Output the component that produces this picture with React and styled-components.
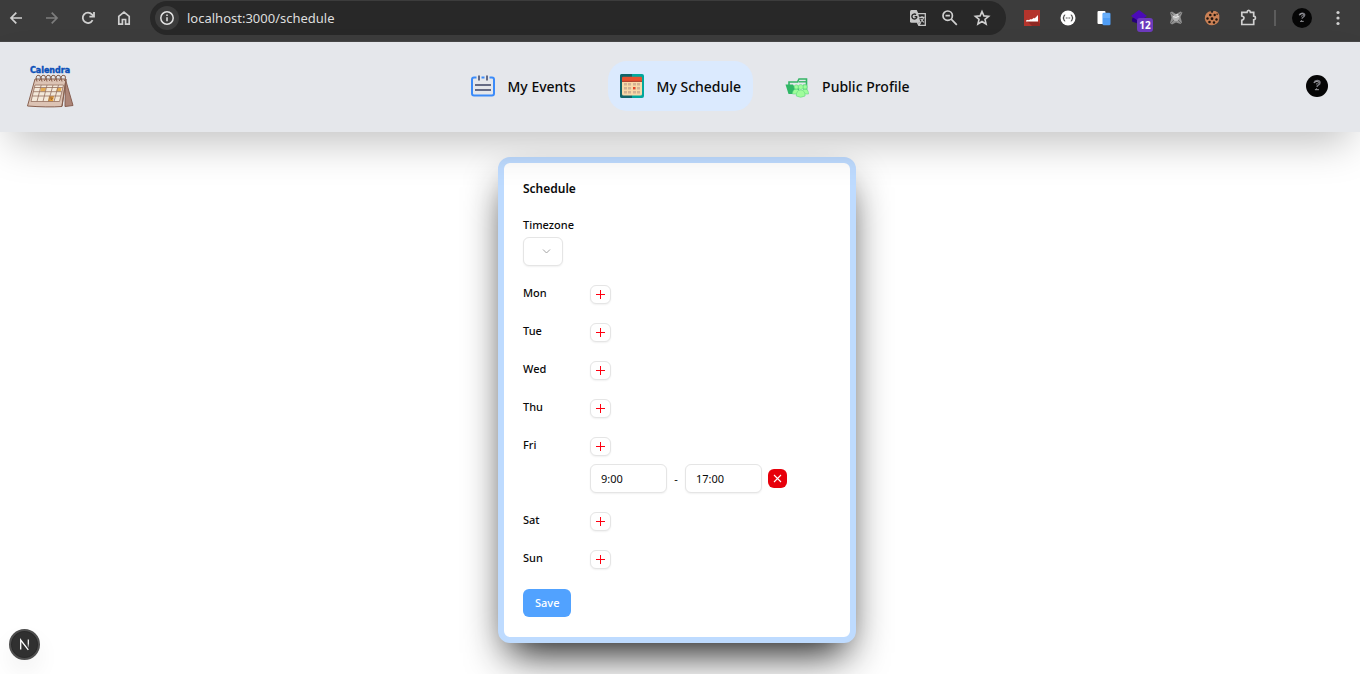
import React from "react";
import styled, { createGlobalStyle, css } from "styled-components";

const GlobalStyle = createGlobalStyle`
  *, *::before, *::after { box-sizing: border-box; }
  body {
    margin: 0;
    background: #fff;
    color: #0a0a0a;
    font-family: "Noto Sans", "Open Sans", sans-serif;
    font-size: 11px;
    line-height: 16px;
  }
  button, input, select { font: inherit; color: inherit; margin: 0; }
  svg { display: block; flex: none; }
`;

/* ---------- browser bar ---------- */

const Toolbar = styled.div`
  display: flex;
  align-items: center;
  gap: 16px;
  height: 42px;
  padding: 1px 12px 6px 6px;
  background: #3c3c3c;
  border-bottom: 1px solid #484848;
`;

const ToolButton = styled.button`
  position: relative;
  display: grid;
  place-items: center;
  flex: none;
  width: 20px;
  height: 20px;
  padding: 0;
  border: 0;
  border-radius: 50%;
  background: none;
  color: ${(p) => (p.$dim ? "#7d7d7d" : "#d0d0d0")};
`;

const AddressBar = styled.div`
  display: flex;
  align-items: center;
  gap: 12px;
  flex: 1;
  min-width: 0;
  height: 34px;
  padding: 0 14px 0 5px;
  border-radius: 17px;
  background: #282828;
`;

const Site = styled.label`
  display: flex;
  align-items: center;
  gap: 8px;
  flex: 1;
  min-width: 0;
`;

const SiteInfo = styled.span`
  display: grid;
  place-items: center;
  flex: none;
  width: 24px;
  height: 24px;
  border-radius: 50%;
  background: #3c3c3c;
  color: #e3e3e3;
`;

const Address = styled.input`
  flex: 1;
  min-width: 0;
  padding: 0;
  border: 0;
  outline: 0;
  background: none;
  color: #dedede;
  font-family: "Noto Sans", sans-serif;
  font-size: 13px;
  line-height: 20px;
`;

const Separator = styled.span`
  flex: none;
  width: 2px;
  height: 16px;
  background: #5c5c5c;
`;

const Badge = styled.span`
  position: absolute;
  left: 7px;
  top: 10px;
  width: 16px;
  height: 14px;
  border-radius: 3px;
  background: #6d3bbd;
  color: #fff;
  font-size: 10px;
  font-weight: 700;
  line-height: 14px;
  text-align: center;
`;

/* ---------- site header ---------- */

const Header = styled.header`
  position: relative;
  z-index: 1;
  display: flex;
  align-items: center;
  justify-content: space-between;
  height: 90px;
  padding: 0 32px 2px 26px;
  background: #e5e7eb;
  box-shadow: 0 20px 40px -10px rgba(0, 0, 0, 0.25);
`;

const Nav = styled.nav`
  display: flex;
  gap: 20px;
`;

const NavLink = styled.a`
  display: flex;
  align-items: center;
  gap: 13px;
  height: 50px;
  padding: 0 12px;
  border-radius: 19px;
  color: #0a0a0a;
  font-size: 14px;
  font-weight: 500;
  line-height: 20px;
  text-decoration: none;
  ${(p) => p.$active && css`background: #dbeafe;`}

  > span { padding-top: 2px; }
`;

const UserButton = styled.button`
  display: block;
  padding: 0;
  border: 0;
  border-radius: 50%;
  background: none;
`;

/* ---------- schedule card ---------- */

const Main = styled.main`
  display: flex;
  justify-content: center;
  padding: 25px 6px 31px 0;
  overflow: hidden;
`;

const Card = styled.form`
  width: 358px;
  padding: 16px 19px 20px;
  border: 6px solid #bedbff;
  border-radius: 12px;
  background: #fff;
  box-shadow: 0 20px 40px -10px #171717;
`;

const Title = styled.h1`
  margin: 0 0 18px;
  font-size: 12px;
  font-weight: 600;
  line-height: 20px;
`;

const Field = styled.div`
  display: flex;
  flex-direction: column;
  align-items: flex-start;
  gap: 4px;
  margin-bottom: 19px;
`;

const Label = styled.label`
  font-weight: 500;
`;

const box = css`
  border: 1px solid #e5e5e5;
  border-radius: 6px;
  background: #fff;
  box-shadow: 0 1px 2px rgba(0, 0, 0, 0.06);
`;

const SelectWrap = styled.span`
  display: grid;
  align-items: center;
  color: #a3a3a3;

  > * { grid-area: 1 / 1; }
  > svg { justify-self: end; margin-right: 11px; pointer-events: none; }
`;

const Select = styled.select`
  ${box}
  appearance: none;
  width: 40px;
  height: 29px;
`;

const Days = styled.div`
  display: grid;
  gap: 19px;
  margin-bottom: 20px;
`;

const Day = styled.div`
  display: grid;
  grid-template-columns: 48px 1fr;
  column-gap: 19px;
`;

const DayName = styled.span`
  height: 16px;
  font-weight: 500;
`;

const Slots = styled.div`
  display: flex;
  flex-direction: column;
  align-items: flex-start;
  gap: 8px;
`;

const AddButton = styled.button`
  ${box}
  display: grid;
  place-items: center;
  width: 21px;
  height: 19px;
  padding: 0;
  color: #ff0010;
`;

const Slot = styled.div`
  display: flex;
  align-items: center;
  gap: 6px;
`;

const TimeInput = styled.input`
  ${box}
  width: 77px;
  height: 29px;
  padding: 0 10px;
  outline: 0;
`;

const Dash = styled.span`
  width: 6px;
  text-align: center;
`;

const RemoveButton = styled.button`
  display: grid;
  place-items: center;
  width: 19px;
  height: 19px;
  padding: 0;
  border: 0;
  border-radius: 6px;
  background: #e7000b;
  color: #fff;
`;

const SaveButton = styled.button`
  display: block;
  height: 28px;
  padding: 0 12px;
  border: 0;
  border-radius: 6px;
  background: #51a2ff;
  color: #fff;
  font-weight: 500;
`;

const DevBadge = styled.button`
  position: fixed;
  left: 9px;
  bottom: 14px;
  display: grid;
  place-items: center;
  width: 31px;
  height: 31px;
  padding: 0;
  border: 2px solid #4e4e4e;
  border-radius: 50%;
  background: #303030;
  box-shadow: 0 0 0 1px #2a2a2a inset, 0 12px 24px rgba(0, 0, 0, 0.06);
`;

/* ---------- drawings ---------- */

const Line = ({ size = 20, w = 2, box: vb = 20, crisp, children }) => (
  <svg
    width={size}
    height={size}
    viewBox={`0 0 ${vb} ${vb}`}
    fill="none"
    stroke="currentColor"
    strokeWidth={w}
    shapeRendering={crisp ? "crispEdges" : undefined}
    aria-hidden="true"
  >
    {children}
  </svg>
);

const BackIcon = () => <Line w={1.7}><path d="M16 10H5M10.3 4.7 5 10l5.3 5.3" /></Line>;
const ForwardIcon = () => <Line w={1.7}><path d="M4 10h11M9.7 4.7 15 10l-5.3 5.3" /></Line>;
const ReloadIcon = () => (
  <Line w={1.8}><path d="M14.6 12.2A5.2 5.2 0 1 1 13.9 6.4L15.5 8" /><path d="M16 4v4.6h-4.6" /></Line>
);
const HomeIcon = () => <Line w={1.7}><path d="M4.8 16.2V8.3L10 4.2l5.2 4.1v7.9h-3.6v-4.7H8.4v4.7z" /></Line>;
const InfoIcon = () => (
  <Line size={16} box={16} w={1.5}><circle cx="8" cy="8" r="6.2" /><path d="M8 7.2v4M8 4.5v1.6" /></Line>
);
const TranslateIcon = () => (
  <svg width="20" height="20" viewBox="0 0 20 20" aria-hidden="true">
    <path d="M9 5.700h8.300v11.600h-6.500l-1.500-3" fill="none" stroke="#c7c7c7" strokeWidth="1.300" />
    <path d="M3.500 2h5.200l1.400 3 2.400 9.800H3.500A1.500 1.500 0 0 1 2 13.300V3.500A1.500 1.500 0 0 1 3.500 2z" fill="#c7c7c7" />
    <path d="M9 8.600H6.600M8.900 8.600A2.500 2.500 0 1 1 8 6.600" fill="none" stroke="#282828" strokeWidth="1.400" />
    <path d="M11.200 9.400h5.300M14 8v1.400M15.800 9.400q-.8 2.800-3.200 4.400M12.700 10.800q1 2 3.400 3.600M10.600 14.300l.8 2.400 1.500-2.400" fill="none" stroke="#c7c7c7" strokeWidth="1.100" />
  </svg>
);
const ZoomOutIcon = () => (
  <Line w={1.7}><circle cx="7.700" cy="7.700" r="4.700" /><path d="m11.200 11.200 5.600 5.600M5.500 7.700h4.400" /></Line>
);
const StarIcon = () => (
  <Line w={1.6}><path d="m10 3.600 1.900 4.300 4.700.4-3.600 3.100 1.100 4.600-4.100-2.500L5.900 16 7 11.400 3.400 8.300l4.700-.4z" /></Line>
);
const GraphExtension = () => (
  <svg width="16" height="16" viewBox="0 0 16 16" aria-hidden="true">
    <path fill="#b4342c" d="M0 0h16v16H0z" />
    <path fill="#8f2822" d="M14 11.500l2 2V16H8l-4.500-4.500z" />
    <path fill="#fff" d="M2 11.500v-1l2-.8.5.5L7 8.900l.6.5L10 7.800l.6.6L14 5v6.500z" />
  </svg>
);
const BracesExtension = () => (
  <svg width="16" height="16" viewBox="0 0 16 16" aria-hidden="true">
    <circle cx="8" cy="8" r="7.500" fill="#fff" />
    <path d="M5.200 5q-1.300 0-1.300 1v1q0 1-1 1 1 0 1 1v1q0 1 1.300 1M10.800 5q1.300 0 1.300 1v1q0 1 1 1-1 0-1 1v1q0 1-1.300 1" fill="none" stroke="#222" />
    <path d="M5.800 8h4.400" stroke="#333" strokeWidth="1.200" strokeDasharray="1 .7" />
  </svg>
);
const PagesExtension = () => (
  <svg width="16" height="16" viewBox="0 0 16 16" aria-hidden="true">
    <rect x="1.500" y="1" width="8" height="13" rx="1" fill="#fff" />
    <rect x="6.500" y="2.800" width="8" height="12.400" rx="1.300" fill="#4f9df5" />
    <path d="M7 4.500q0-1.200 1.300-1.200h4.400q1.300 0 1.300 1.200V8H7z" fill="#68aefa" />
  </svg>
);
const LayersExtension = () => (
  <svg width="20" height="20" viewBox="0 0 20 20" aria-hidden="true">
    <path fill="#26007a" d="m2 10.500 7-3 8 3v3L9 16 2 13.500z" />
    <path fill="#4b0ab8" d="m9 2 8 6-8 5.500L1 8z" />
  </svg>
);
const CrossedExtension = () => (
  <svg width="16" height="16" viewBox="0 0 16 16" aria-hidden="true">
    <path d="M2 2.500 4 1.500l4 2.500 4.500-2.500 2 1-2 4.500 1.500 5.500-1.500 1.500L8 12.500 4 14.500 2 13l1.500-5.500z" fill="#8f8f8f" />
    <path d="m5 5 3-1 3 1 .5 3-2 3h-3l-2-3z" fill="#b5b5b5" />
    <path d="M5 6.500 8 7.500l3-1.500M8.500 4.500l1.500.5" fill="none" stroke="#e6e6e6" strokeWidth="1.100" />
    <path d="m2.500 2.500 3 3M13.500 2.500l-3 3M3 13l3-3M13 13l-3-3" stroke="#6a6a6a" />
  </svg>
);
const CookieExtension = () => (
  <svg width="16" height="16" viewBox="0 0 16 16" aria-hidden="true">
    <path fill="#c98055" d="M6.500.9a7.300 7.300 0 1 0 8.800 8V5q-.8-3-4-4L9.500 1 8.500 2.800 7 2.500z" />
    <g fill="#20150f">
      <circle cx="6.300" cy="5" r="1.300" /><circle cx="3.500" cy="8.500" r="1.200" /><circle cx="8" cy="8.700" r="1.400" />
      <circle cx="5.500" cy="12" r="1.300" /><circle cx="10" cy="12.500" r="1.200" /><circle cx="12.500" cy="9.500" r="1.200" />
      <circle cx="10.700" cy="5" r="1.200" /><path d="M7.500.5h1.200v2H7.500zM12.500 3.500h1.300v1.200h-1.300z" />
    </g>
  </svg>
);
const PuzzleIcon = () => (
  <Line w={1.7}><path d="M3.800 4.300H9q.2-1.900 1.700-1.900t1.700 1.900h3.300v3.900q1.800.2 1.800 1.800t-1.800 1.800v4.700H3.800v-4.200q2.200-.5 2.200-2.200T3.800 8z" /></Line>
);
const DotsIcon = () => (
  <svg width="20" height="20" viewBox="0 0 20 20" fill="currentColor" aria-hidden="true">
    <circle cx="10" cy="4.500" r="1.600" /><circle cx="10" cy="10" r="1.600" /><circle cx="10" cy="15.500" r="1.600" />
  </svg>
);
const Avatar = ({ size }) => (
  <svg width={size} height={size} viewBox="0 0 22 22" aria-hidden="true">
    <circle cx="11" cy="11" r="11" fill="#060606" />
    <path d="M8 8Q8.600 5.800 11.200 5.600q2.800.1 2.800 2.200 0 1.500-1.700 2.200-1.200.5-1.200 1.900" fill="none" stroke="#77777e" strokeWidth="1.500" />
    <path d="M8.500 7.500q1.500-1.500 3.300-1M10 9.300l1.800-1.300M12.700 6.700v1.800" fill="none" stroke="#cfcfd4" strokeWidth=".7" />
    <path d="M8.900 14.700h4M10.500 13.400v.8" stroke="#a5a5aa" />
  </svg>
);

const Logo = () => (
  <svg width="48" height="44" viewBox="0 0 48 44" role="img" aria-label="Calendra">
    <text x="24" y="9" textAnchor="middle" fontFamily="DejaVu Sans, sans-serif" fontSize="8" fontWeight="700" fill="#0a4fb8" stroke="#0a4fb8" strokeWidth=".4">Calendra</text>
    <path d="M39.500 15.500 47 41.500l-8 1z" fill="#ad8577" stroke="#875f52" />
    <path d="M9 15h31l-4 27.500q-15 1-34.500-.5z" fill="#dcc3b4" stroke="#87604f" />
    <path d="M9 21h28.500l-4 16.500H5z" fill="#f4e9da" />
    <path d="M15 24h5l-.8 3.500h-5zM31 24h4.500l-.8 3.500h-4.500z" fill="#e3ab52" />
    <path d="M23 32h5l-1 5.500h-5z" fill="#e3a03b" />
    <path d="M9 21h28.500M8.300 23.500h28.500M7.300 27.700h28.500M6.300 32h28.500M5 37.500h28.500M9 21 5 37.500M15.200 21 11 37.500M21 21l-4 16.500M27 21l-4.500 16.500M32.500 21 28 37.500M37.500 21l-4 16.500" fill="none" stroke="#94705f" strokeWidth=".8" />
    <path d="M24 34h2.500l-1.500 2" fill="none" stroke="#8a5530" strokeWidth=".8" />
    <g fill="none" stroke="#87604f">
      {[11, 16, 21, 26, 31, 36].map((x) => (
        <path key={x} d={`M${x} 17.500q-2-5.500 1-6.300 3-.2 2.500 3.200-.4 2-1.500 2.600`} />
      ))}
    </g>
    <path d="m36 42 4-27" stroke="#87604f" fill="none" />
  </svg>
);

const EventsIcon = () => (
  <svg width="24" height="24" viewBox="0 0 24 24" fill="none" aria-hidden="true">
    <path d="M5.500 3.500H3Q1 3.500 1 5.500v14Q1 21.500 3 21.500h18q2 0 2-2v-14q0-2-2-2h-2.500M10.500 3.500h3" stroke="#3b8bf9" strokeWidth="2" />
    <path d="M8 1.500v5M16 1.500v5" stroke="#656b84" strokeWidth="2" />
    <path d="M4 11h16M4 16h16" stroke="#656b84" strokeWidth="2" />
  </svg>
);

const ScheduleIcon = () => (
  <svg width="24" height="24" viewBox="0 0 24 24" aria-hidden="true">
    <rect width="24" height="24" rx="2" fill="#00a89d" />
    <path d="M2 0h10v24H2q-2 0-2-2V2q0-2 2-2z" fill="#116468" />
    <path d="M2 8h20v12q0 1.500-1.500 1.500h-17Q2 21.500 2 20z" fill="#f9d9a8" />
    <path d="M2 7.500V4q0-1.300 1.300-1.300h17.400Q22 2.700 22 4v3.500z" fill="#e9512e" />
    <path d="M2 7.300h20" stroke="#bd3e2b" />
    <g fill="#d3b294">
      {[9, 13, 17].map((y) => [4, 8, 13, 17].map((x) => (
        <rect key={`${x}-${y}`} x={x} y={y} width="3" height="2.500" />
      )))}
    </g>
    <rect x="13" y="13" width="2.300" height="2.300" fill="#e84628" />
  </svg>
);

const ProfileIcon = () => (
  <svg width="24" height="24" viewBox="0 0 24 24" aria-hidden="true">
    <path d="M4 11V8h8.500l1.500-3h7.500v12" fill="none" stroke="#35b565" strokeWidth="1.600" />
    <path d="M13.500 7.800h7.500" stroke="#35b565" strokeWidth="1.400" />
    <path d="M.5 10.500H8l1.300 2H14V20H3.500z" fill="#2fb765" />
    <path d="M22 10.500V19h-4v-8.500z" fill="#55d27b" />
    <g fill="#a0fd9c" stroke="#62d880" strokeWidth=".6">
      <circle cx="11.300" cy="13" r="2.200" /><circle cx="20" cy="13" r="2.200" />
      <path d="M7.500 20q0-4.800 3.800-4.800T15 20zM16.500 20q0-4.800 3.500-4.800t3.500 4.800z" />
      <circle cx="15.700" cy="13" r="2.500" />
      <path d="M11.300 22q0-6 4.400-6t4.400 6q-4.400 2.500-8.800 0z" />
    </g>
  </svg>
);

const ChevronIcon = () => <Line size={11} box={11} w={1}><path d="M2 3.500 5.500 7 9 3.500" /></Line>;
const PlusIcon = () => <Line size={11} box={11} w={1} crisp><path d="M1 5.500h9M5.500 1v9" /></Line>;
const CrossIcon = () => <Line size={11} box={11} w={1.1}><path d="m2 2 7 7M9 2 2 9" /></Line>;
const NextMark = () => (
  <svg width="13" height="13" viewBox="0 0 13 13" fill="none" aria-hidden="true">
    <defs>
      <linearGradient id="fade" x1="0" y1="0" x2="0" y2="1">
        <stop offset=".5" stopColor="#fff" /><stop offset="1" stopColor="#fff" stopOpacity=".2" />
      </linearGradient>
    </defs>
    <path d="M2.700 11.500V2l7.600 9.800" stroke="#fff" strokeWidth="1.300" />
    <path d="M9.700 1.500h1.200v8H9.700z" fill="url(#fade)" />
  </svg>
);

/* ---------- page ---------- */

const links = [
  { text: "My Events", Icon: EventsIcon },
  { text: "My Schedule", Icon: ScheduleIcon, active: true },
  { text: "Public Profile", Icon: ProfileIcon },
];

const week = [
  { name: "Mon", slots: [] },
  { name: "Tue", slots: [] },
  { name: "Wed", slots: [] },
  { name: "Thu", slots: [] },
  { name: "Fri", slots: [["9:00", "17:00"]] },
  { name: "Sat", slots: [] },
  { name: "Sun", slots: [] },
];

const extensions = [
  ["Graph", GraphExtension],
  ["Braces", BracesExtension],
  ["Pages", PagesExtension],
  ["Layers", LayersExtension, "12"],
  ["Crossed", CrossedExtension],
  ["Cookies", CookieExtension],
  ["Extensions", PuzzleIcon],
];

export default function App() {
  return (
    <>
      <GlobalStyle />
      <Toolbar>
        <ToolButton aria-label="Back"><BackIcon /></ToolButton>
        <ToolButton aria-label="Forward" $dim><ForwardIcon /></ToolButton>
        <ToolButton aria-label="Reload"><ReloadIcon /></ToolButton>
        <ToolButton aria-label="Home"><HomeIcon /></ToolButton>
        <AddressBar>
          <Site>
            <SiteInfo><InfoIcon /></SiteInfo>
            <Address aria-label="Address" defaultValue="localhost:3000/schedule" />
          </Site>
          <ToolButton aria-label="Translate"><TranslateIcon /></ToolButton>
          <ToolButton aria-label="Zoom"><ZoomOutIcon /></ToolButton>
          <ToolButton aria-label="Bookmark"><StarIcon /></ToolButton>
        </AddressBar>
        {extensions.map(([name, Icon, count]) => (
          <ToolButton key={name} aria-label={name}>
            <Icon />
            {count && <Badge>{count}</Badge>}
          </ToolButton>
        ))}
        <Separator />
        <ToolButton aria-label="Profile"><Avatar size={20} /></ToolButton>
        <ToolButton aria-label="Menu"><DotsIcon /></ToolButton>
      </Toolbar>

      <Header>
        <a href="#home"><Logo /></a>
        <Nav>
          {links.map(({ text, Icon, active }) => (
            <NavLink key={text} href="#nav" $active={active}>
              <Icon />
              <span>{text}</span>
            </NavLink>
          ))}
        </Nav>
        <UserButton aria-label="Account"><Avatar size={22} /></UserButton>
      </Header>

      <Main>
        <Card onSubmit={(e) => e.preventDefault()}>
          <Title>Schedule</Title>
          <Field>
            <Label htmlFor="timezone">Timezone</Label>
            <SelectWrap>
              <Select id="timezone" defaultValue=""><option value="" /></Select>
              <ChevronIcon />
            </SelectWrap>
          </Field>
          <Days>
            {week.map(({ name, slots }) => (
              <Day key={name}>
                <DayName>{name}</DayName>
                <Slots>
                  <AddButton type="button" aria-label={`Add time on ${name}`}><PlusIcon /></AddButton>
                  {slots.map(([from, to]) => (
                    <Slot key={from}>
                      <TimeInput aria-label={`${name} start time`} defaultValue={from} />
                      <Dash>-</Dash>
                      <TimeInput aria-label={`${name} end time`} defaultValue={to} />
                      <RemoveButton type="button" aria-label="Remove time"><CrossIcon /></RemoveButton>
                    </Slot>
                  ))}
                </Slots>
              </Day>
            ))}
          </Days>
          <SaveButton type="submit">Save</SaveButton>
        </Card>
      </Main>

      <DevBadge aria-label="Developer tools"><NextMark /></DevBadge>
    </>
  );
}
